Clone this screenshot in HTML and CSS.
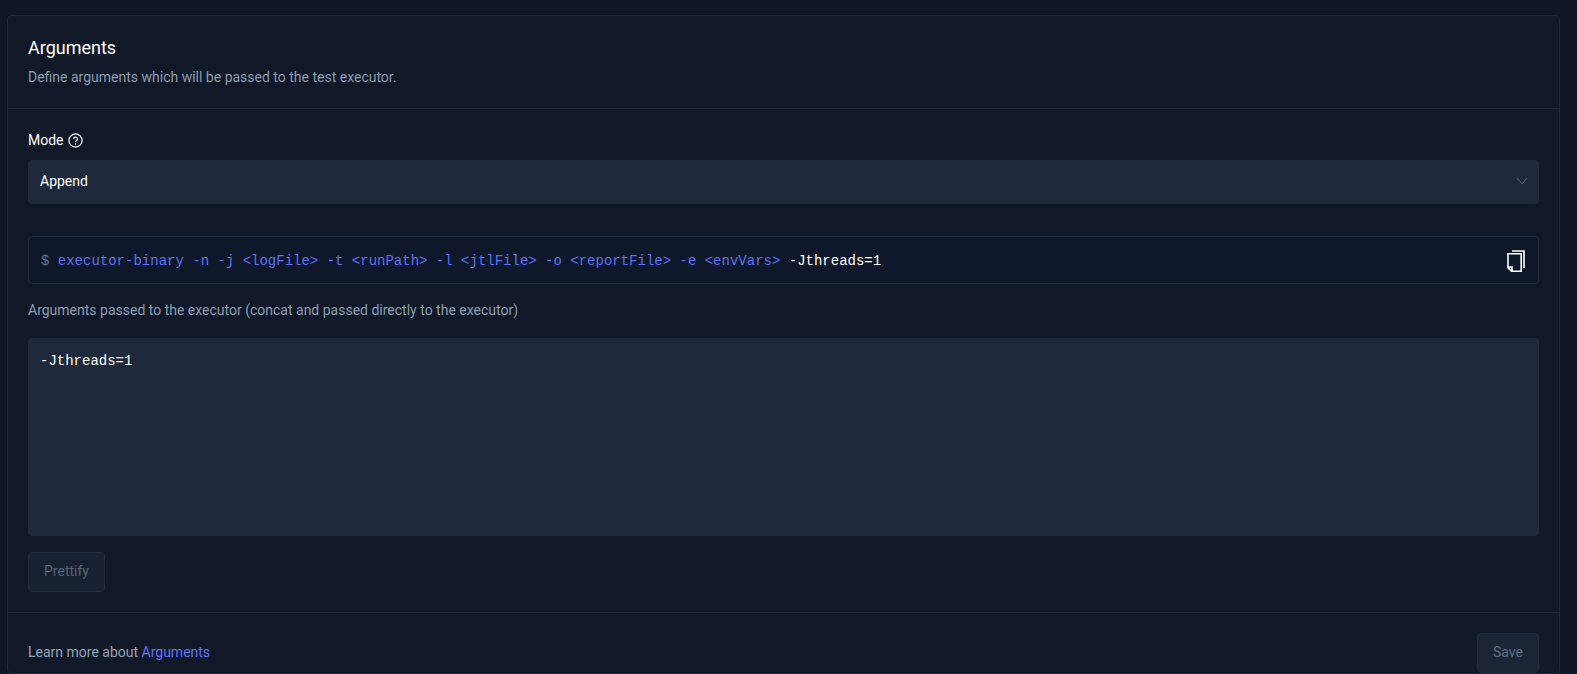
FILE: index.html
```html
<!DOCTYPE html>
<html lang="en">
<head>
<meta charset="utf-8">
<title>Arguments</title>
<link rel="stylesheet" href="styles.css">
</head>
<body>
<section class="card">
  <header class="card-header">
    <h2 class="title">Arguments</h2>
    <p class="subtitle">Define arguments which will be passed to the test executor.</p>
  </header>
  <div class="card-body">
    <div class="label-row">
      <span class="label">Mode</span>
      <svg class="help" width="15" height="15" viewBox="0 0 15 15" fill="none" stroke="currentColor">
        <circle cx="7.5" cy="7.5" r="6.6" stroke-width="1.2"/>
        <path d="M5.6 5.9a1.9 1.9 0 1 1 2.9 1.7c-.65.4-1 .75-1 1.4" stroke-width="1.2"/>
        <circle cx="7.5" cy="10.9" r=".75" fill="currentColor" stroke="none"/>
      </svg>
    </div>
    <div class="select">
      <span class="select-value">Append</span>
      <svg class="chevron" width="12" height="8" viewBox="0 0 12 8" fill="none" stroke="currentColor" stroke-width="1">
        <path d="M1 1l5 6 5-6"/>
      </svg>
    </div>
    <div class="code-box">
      <code class="code"><span class="prompt">$</span> <span class="cmd">executor-binary -n -j &lt;logFile&gt; -t &lt;runPath&gt; -l &lt;jtlFile&gt; -o &lt;reportFile&gt; -e &lt;envVars&gt;</span> <span class="arg">-Jthreads=1</span></code>
      <svg class="copy" width="18" height="22" viewBox="0 0 18 22" fill="none" stroke="currentColor" stroke-width="1.6">
        <path d="M5 1h12v17"/>
        <path d="M4 3.8h10.2v17.4H4.6L1 17.8V3.8z" fill="none"/>
        <path d="M1 17h4v4"/>
      </svg>
    </div>
    <p class="hint">Arguments passed to the executor (concat and passed directly to the executor)</p>
    <div class="editor"><code>-Jthreads=1</code></div>
    <button class="btn btn-prettify" type="button">Prettify</button>
  </div>
  <footer class="card-footer">
    <p class="learn">Learn more about <a href="#" class="link">Arguments</a></p>
    <button class="btn btn-save" type="button">Save</button>
  </footer>
</section>
</body>
</html>
```
FILE: styles.css
```css
* { box-sizing: border-box; }
html, body { height: 674px; overflow: hidden; }
body {
  margin: 0;
  padding: 15px 17px 0 7px;
  background: #0f1626;
  color: #fff;
  font-family: Roboto, "Liberation Sans", sans-serif;
  font-size: 14px;
}
.card {
  background: #111827;
  border: 1px solid #1e293b;
  border-radius: 4px;
}
.card-header {
  padding: 20px 20px 0;
  height: 93px;
  border-bottom: 1px solid #1e293b;
}
.title {
  margin: 0;
  font-size: 18px;
  font-weight: 400;
  line-height: 24px;
}
.subtitle {
  margin: 6px 0 0;
  line-height: 22px;
  color: #8a9db3;
}
.card-body {
  padding: 19px 20px 20px;
  height: 504px;
  border-bottom: 1px solid #1e293b;
}
.label-row {
  display: flex;
  align-items: center;
  gap: 4px;
  height: 24px;
}
.help { display: block; }
.select {
  margin-top: 8px;
  height: 44px;
  padding: 0 11px 2px 12px;
  display: flex;
  align-items: center;
  justify-content: space-between;
  background: #1e293b;
  border-radius: 4px;
}
.chevron { color: #56657a; }
.code-box {
  margin-top: 32px;
  height: 48px;
  padding: 1px 13px 0 12px;
  display: flex;
  align-items: center;
  justify-content: space-between;
  background: #0f172a;
  border: 1px solid #1e293b;
  border-radius: 4px;
}
code, .code {
  font-family: "Liberation Mono", "DejaVu Sans Mono", monospace;
  font-size: 14px;
}
.prompt { color: #64748b; }
.cmd { color: #5b72f3; }
.arg { color: #fff; }
.copy { color: #fff; display: block; }
.hint {
  margin: 15px 0 0;
  line-height: 22px;
  color: #8a9db3;
}
.editor {
  margin-top: 17px;
  height: 198px;
  padding: 12px;
  line-height: 20px;
  background: #1e293b;
  border-radius: 4px;
}
.btn {
  display: block;
  font-family: inherit;
  font-size: 14px;
  border: 1px solid #1e293b;
  border-radius: 4px;
  color: #56657a;
}
.btn-prettify {
  margin-top: 16px;
  width: 77px;
  height: 40px;
  padding: 0 0 3px;
  background: #172131;
}
.card-footer {
  padding: 20px 20px 0;
  display: flex;
  justify-content: space-between;
  align-items: center;
}
.learn {
  margin: 0 0 2px;
  color: #94a3b8;
}
.link { color: #6272f5; text-decoration: none; }
.btn-save {
  width: 62px;
  height: 40px;
  padding: 0 0 2px;
  background: #1a2535;
  color: #5f6f88;
}
```
